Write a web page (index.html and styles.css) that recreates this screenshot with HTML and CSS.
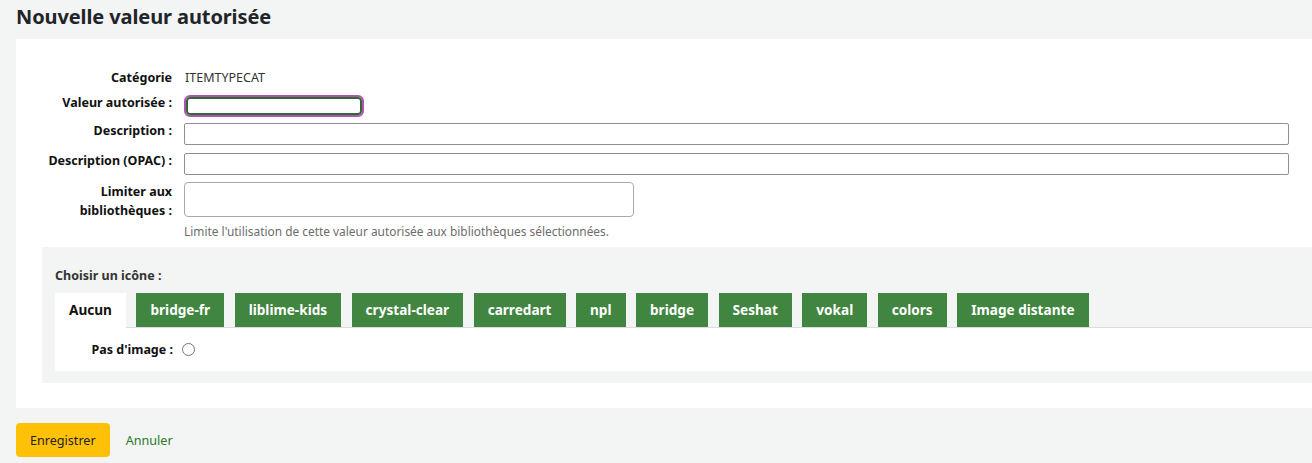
FILE: index.html
```html
<!DOCTYPE html>
<html lang="fr">
<head>
<meta charset="utf-8">
<title>Nouvelle valeur autorisée</title>
<link rel="stylesheet" href="styles.css">
</head>
<body>
<h1 class="page-title">Nouvelle valeur autorisée</h1>
<form class="av-form">
  <div class="panel">
    <ol class="fields">
      <li class="row row-static">
        <span class="lbl">Catégorie</span>
        <span class="static">ITEMTYPECAT</span>
      </li>
      <li class="row">
        <label class="lbl" for="av">Valeur autorisée :</label>
        <input class="inp inp-short focused" id="av" type="text">
      </li>
      <li class="row">
        <label class="lbl" for="desc">Description :</label>
        <input class="inp inp-wide" id="desc" type="text">
      </li>
      <li class="row">
        <label class="lbl" for="opac">Description (OPAC) :</label>
        <input class="inp inp-wide" id="opac" type="text">
      </li>
      <li class="row row-multi">
        <label class="lbl lbl-multi" for="branches">Limiter aux bibliothèques :</label>
        <div class="stack">
          <div class="select-box" id="branches"></div>
          <div class="hint">Limite l'utilisation de cette valeur autorisée aux bibliothèques sélectionnées.</div>
        </div>
      </li>
    </ol>

    <fieldset class="icons">
      <div class="icons-title">Choisir un icône :</div>
      <ul class="tabs">
        <li class="tab active">Aucun</li>
        <li class="tab">bridge-fr</li>
        <li class="tab">liblime-kids</li>
        <li class="tab">crystal-clear</li>
        <li class="tab">carredart</li>
        <li class="tab">npl</li>
        <li class="tab">bridge</li>
        <li class="tab">Seshat</li>
        <li class="tab">vokal</li>
        <li class="tab">colors</li>
        <li class="tab">Image distante</li>
      </ul>
      <div class="tab-body">
        <label class="lbl" for="noimg">Pas d'image :</label>
        <span class="radio" id="noimg"></span>
      </div>
    </fieldset>
  </div>

  <div class="actions">
    <button type="button" class="btn-save">Enregistrer</button>
    <a class="cancel" href="#">Annuler</a>
  </div>
</form>
</body>
</html>
```

FILE: styles.css
```css
* { box-sizing: border-box; }

html, body {
  margin: 0;
  padding: 0;
  background: #f3f4f4;
  font-family: "Noto Sans", "Open Sans", sans-serif;
  color: #222;
  font-size: 12px;
}

body {
  padding: 0 0 0 16px;
  overflow: hidden;
}

.page-title {
  margin: 0;
  padding: 3px 0 0;
  height: 39px;
  font-size: 20px;
  line-height: 28px;
  font-weight: 700;
  color: #212529;
  letter-spacing: -0.1px;
}

.panel {
  background: #fff;
  padding: 30px 0 25px 26px;
}

.fields {
  list-style: none;
  margin: 0;
  padding: 0;
}

/* label column + control column */
.row {
  display: flex;
  align-items: flex-start;
  gap: 12px;
  margin-bottom: 8px;
}

.row-static { height: 18px; line-height: 18px; }
.row-multi { margin-top: -1px; margin-bottom: 0; }

.lbl {
  width: 130px;
  text-align: right;
  font-weight: 700;
  font-size: 12.5px;
  color: #111;
  line-height: 16px;
  flex: none;
}

.row-static .lbl { line-height: 18px; }

.lbl-multi { padding-top: 0; line-height: 19px; }

.static { font-size: 12.5px; color: #333; padding-left: 1px; }

.inp {
  height: 22px;
  border: 1px solid #8f8f9d;
  border-radius: 2px;
  background: #fff;
  font: inherit;
  margin: 0;
}

.inp-short { width: 180px; }
.inp-wide { width: 1105px; }

.focused {
  border: 2px solid #2e6b2e;
  outline: 2px solid #b152b8;
  outline-offset: 0;
  border-radius: 4px;
  height: 18px;
  width: 176px;
  margin: 2px 0 0 2px;
}

.stack { display: flex; flex-direction: column; }

.select-box {
  width: 450px;
  height: 35px;
  border: 1px solid #aaa;
  border-radius: 4px;
  background: #fff;
}

.hint {
  margin-top: 6px;
  font-size: 11.9px;
  color: #6c6c6c;
}

.icons {
  border: 0;
  margin: 8px 0 0 0;
  padding: 20px 0 12px 13px;
  background: #f3f4f4;
  min-width: 0;
}

.icons-title {
  font-weight: 700;
  font-size: 12.5px;
  color: #333;
  margin-bottom: 9px;
}

.tabs {
  list-style: none;
  margin: 0;
  padding: 0;
  display: flex;
  gap: 10.5px;
  border-bottom: 1px solid #dcdcdc;
}

.tab {
  height: 34px;
  line-height: 34px;
  padding: 0 14px;
  background: #408540;
  color: #fff;
  font-weight: 700;
  font-size: 13.6px;
}

.tab.active {
  background: #fff;
  color: #111;
  margin-bottom: -1px;
  height: 35px;
}

.tab-body {
  background: #fff;
  height: 43px;
  display: flex;
  align-items: center;
  gap: 9px;
}

.tab-body .lbl { width: 118px; }

.radio {
  width: 13px;
  height: 13px;
  border: 1px solid #767676;
  border-radius: 50%;
  background: #fff;
}

.actions {
  display: flex;
  align-items: center;
  gap: 16px;
  padding-top: 15px;
}

.btn-save {
  height: 34px;
  padding: 0 14px;
  background: #ffc107;
  border: 0;
  border-radius: 4px;
  font: inherit;
  font-size: 12.6px;
  color: #222;
}

.cancel {
  color: #2b7a2b;
  text-decoration: none;
  font-size: 12.6px;
}
```
